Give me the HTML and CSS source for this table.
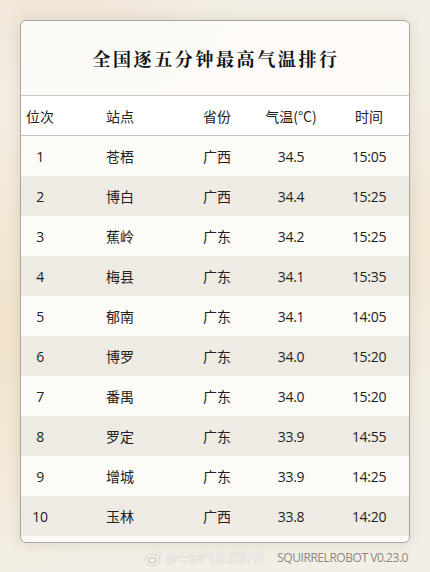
FILE: index.html
```html
<!DOCTYPE html>
<html lang="zh-CN">
<head>
<meta charset="utf-8">
<link rel="stylesheet" href="styles.css">
</head>
<body>
<div class="page">
  <div class="card">
    <h1 class="title">全国逐五分钟最高气温排行</h1>
    <div class="row head">
      <span>位次</span><span>站点</span><span>省份</span><span>气温(°C)</span><span>时间</span>
    </div>
    <div class="row"><span>1</span><span>苍梧</span><span>广西</span><span>34.5</span><span>15:05</span></div>
    <div class="row alt"><span>2</span><span>博白</span><span>广西</span><span>34.4</span><span>15:25</span></div>
    <div class="row"><span>3</span><span>蕉岭</span><span>广东</span><span>34.2</span><span>15:25</span></div>
    <div class="row alt"><span>4</span><span>梅县</span><span>广东</span><span>34.1</span><span>15:35</span></div>
    <div class="row"><span>5</span><span>郁南</span><span>广东</span><span>34.1</span><span>14:05</span></div>
    <div class="row alt"><span>6</span><span>博罗</span><span>广东</span><span>34.0</span><span>15:20</span></div>
    <div class="row"><span>7</span><span>番禺</span><span>广东</span><span>34.0</span><span>15:20</span></div>
    <div class="row alt"><span>8</span><span>罗定</span><span>广东</span><span>33.9</span><span>14:55</span></div>
    <div class="row"><span>9</span><span>增城</span><span>广东</span><span>33.9</span><span>14:25</span></div>
    <div class="row alt"><span>10</span><span>玉林</span><span>广西</span><span>33.8</span><span>14:20</span></div>
    <div class="tail"></div>
  </div>
  <div class="footer">
    <span class="wm">
      <svg class="weibo" width="16" height="14" viewBox="0 0 16 14" aria-hidden="true">
        <ellipse cx="6.5" cy="9" rx="6" ry="4.2" fill="none" stroke="#fff" stroke-width="1.3"/>
        <ellipse cx="6" cy="9.5" rx="2" ry="1.6" fill="#fff"/>
        <path d="M10.5 2.5a3.5 3.5 0 0 1 4 4" fill="none" stroke="#fff" stroke-width="1.2"/>
        <path d="M10.8 4.6a1.5 1.5 0 0 1 1.7 1.7" fill="none" stroke="#fff" stroke-width="1.1"/>
      </svg>
      @中国气象爱好者
    </span>
    <span class="ver">SQUIRRELROBOT V0.23.0</span>
  </div>
</div>
</body>
</html>
```
FILE: styles.css
```css
* { box-sizing: border-box; }
html, body { margin: 0; padding: 0; }
body {
  width: 430px;
  height: 572px;
  overflow: hidden;
  background:
    radial-gradient(ellipse 160px 260px at 0px 330px, rgba(240, 218, 178, 0.55), rgba(240, 218, 178, 0) 100%),
    radial-gradient(ellipse 140px 200px at 430px 240px, rgba(238, 222, 190, 0.45), rgba(238, 222, 190, 0) 100%),
    radial-gradient(ellipse 200px 120px at 60px 0px, rgba(236, 220, 196, 0.5), rgba(236, 220, 196, 0) 100%),
    #f3efe7;
  font-family: "Open Sans", "Noto Sans CJK SC", sans-serif;
}
.page {
  padding: 20px 20px 0 20px;
}
.card {
  width: 390px;
  border: 1px solid #a9a6a2;
  border-radius: 6px;
  background: rgba(253, 251, 249, 0.93);
  box-shadow: 0 0 14px rgba(160, 140, 110, 0.25);
  overflow: hidden;
}
.title {
  margin: 0;
  height: 74px;
  display: flex;
  align-items: center;
  justify-content: center;
  font-family: "Noto Serif CJK SC", "Noto Sans CJK SC", serif;
  font-weight: 700;
  font-size: 18px;
  letter-spacing: 2.6px;
  color: #111;
  padding-left: 2px;
}
.row {
  display: grid;
  grid-template-columns: 38px 122px 72px 76px 80px;
  height: 40px;
  align-items: center;
  font-size: 14px;
  color: #222;
  background: rgba(253, 251, 248, 0.6);
}
.row span {
  text-align: center;
  font-family: "Noto Sans CJK SC", sans-serif;
}
.row span:nth-child(1),
.row span:nth-child(4),
.row span:nth-child(5) {
  font-family: "Open Sans", "Noto Sans CJK SC", sans-serif;
  font-size: 14px;
  letter-spacing: -0.3px;
}
.row.head {
  background: #fff;
  border-top: 1px solid #c9c6c2;
  border-bottom: 1px solid #c9c6c2;
  height: 41px;
}
.row.head span {
  font-family: "Noto Sans CJK SC", sans-serif;
  font-size: 14px;
  letter-spacing: 0;
}
.row.head span:nth-child(1) { text-align: left; padding-left: 5px; }
.row.alt { background: #eeeae4; }
.tail { height: 6px; }
.footer {
  display: flex;
  justify-content: flex-end;
  align-items: center;
  gap: 12px;
  padding: 5px 2px 0 0;
  font-size: 12px;
  color: #8a8784;
  font-family: "Open Sans", sans-serif;
}
.wm {
  display: flex;
  align-items: center;
  gap: 4px;
  font-size: 12.5px;
  color: rgba(255, 255, 255, 0.9);
  text-shadow: 0 0 1px rgba(120, 110, 100, 0.6);
  font-family: "Noto Sans CJK SC", sans-serif;
}
.weibo { filter: drop-shadow(0 0 1px rgba(120,110,100,0.7)); }
.ver { letter-spacing: -0.45px; }
```
